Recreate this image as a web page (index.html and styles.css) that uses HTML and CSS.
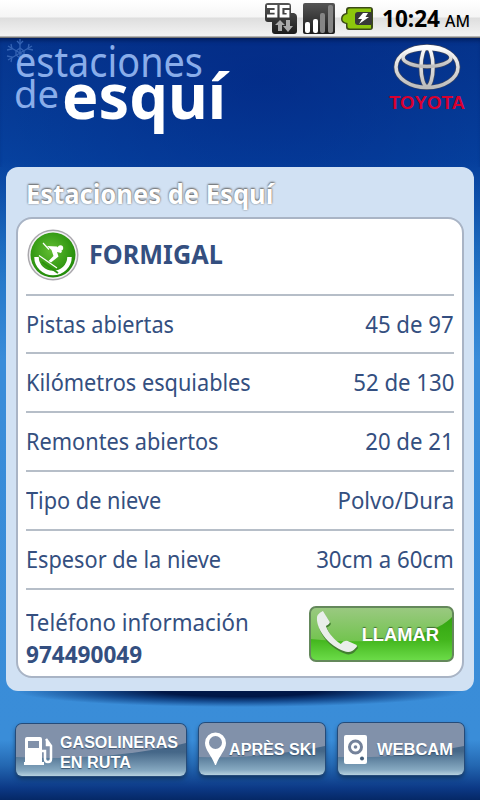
FILE: index.html
```html
<!DOCTYPE html>
<html lang="es">
<head>
  <meta charset="UTF-8">
  <meta name="viewport" content="width=device-width, initial-scale=1.0">
  <title>Estaciones de Esquí</title>
  <link rel="stylesheet" href="styles.css">
</head>
<body>
  <div class="status-bar">
    <svg class="status-3g" width="32" height="32" viewBox="0 0 32 32">
      <defs>
        <linearGradient id="dark" x1="0" y1="0" x2="0" y2="1">
          <stop offset="0" stop-color="#555"/>
          <stop offset="1" stop-color="#1c1c1c"/>
        </linearGradient>
      </defs>
      <path d="M3 0H23Q26 0 26 3V10H29Q32 11 32 14V28Q32 31 29 31H10Q7 31 7 28V19H3Q0 19 0 16V3Q0 0 3 0Z" fill="url(#dark)"/>
      <path d="M2 3.500H11V13H2M5 8.300H10M24.500 3.500H16V13H23V8.500H19.500" fill="none" stroke="#fff" stroke-width="2.800"/>
      <path d="M15 17L20 22H17V28H13V22H10ZM21 17H25V23H28L23 29L18 23H21Z" fill="#aaa"/>
    </svg>
    <svg class="status-signal" width="32" height="32" viewBox="0 0 32 32">
      <rect width="32" height="31" rx="2" fill="url(#dark)"/>
      <rect x="2" y="19" width="5" height="11" rx="2" fill="#fff"/>
      <rect x="10" y="16" width="5" height="14" rx="2" fill="#fff"/>
      <rect x="17" y="10" width="5" height="20" rx="2" fill="#858585"/>
      <rect x="25" y="2" width="5" height="28" rx="2" fill="#858585"/>
    </svg>
    <svg class="status-battery" width="32" height="24" viewBox="0 0 32 24">
      <path d="M8 0H29Q32 0 32 3V20Q32 23 29 23H8Q5 23 5 20V17Q0 16 0 12Q0 7 5 6V3Q5 0 8 0Z" fill="#3b4a18"/>
      <path d="M9 1.500H30V5H19Q15 5 15 9V14Q15 18 19 18H30V21.500H9Q6.500 21.500 6.500 19V16Q1.500 15 1.500 12Q1.500 8 6.500 7V4Q6.500 1.500 9 1.500Z" fill="#8dc70c"/>
      <rect x="14" y="5" width="17" height="13" rx="3" fill="#383838"/>
      <path d="M22 6H27L24.500 10H28L18 17L21 12H17Z" fill="#fff"/>
    </svg>
    <svg class="status-clock" width="96" height="32" viewBox="0 0 96 32">
      <text x="0" y="24" textLength="58" lengthAdjust="spacingAndGlyphs" class="clock-time">10:24</text>
      <text x="63" y="24" textLength="25" lengthAdjust="spacingAndGlyphs" class="clock-period">AM</text>
    </svg>
  </div>

  <div class="header">
    <svg class="logo" width="240" height="110" viewBox="0 0 240 110">
      <g fill="none" stroke="#3463b4" stroke-width="1.300">
        <path d="M20 1V28M8 8L32 22M8 22L32 8"/>
        <path d="M17 3L20 6L23 3M17 27L20 24L23 27M7 12L12 11L11 6M29 6L28 11L33 12M7 18L12 19L11 24M20 10L24 13V17L20 20L16 17V13Z"/>
      </g>
      <text x="15" y="39" textLength="188" lengthAdjust="spacingAndGlyphs" class="logo-light">estaciones</text>
      <text x="14" y="70" textLength="45" lengthAdjust="spacingAndGlyphs" class="logo-light logo-de">de</text>
      <text x="62" y="81" textLength="164" lengthAdjust="spacingAndGlyphs" class="logo-bold">esquí</text>
    </svg>
    <svg class="toyota" width="84" height="76" viewBox="0 0 84 76">
      <defs>
        <linearGradient id="silver" x1="0" y1="0" x2="0" y2="1">
          <stop offset="0" stop-color="#fff"/>
          <stop offset="1" stop-color="#bdbdbd"/>
        </linearGradient>
      </defs>
      <g fill="none" stroke="#3c4661" stroke-width="5">
        <ellipse cx="39" cy="24" rx="31" ry="20.500"/>
        <ellipse cx="39" cy="24" rx="6" ry="19.500"/>
        <ellipse cx="39" cy="14.500" rx="24" ry="9"/>
      </g>
      <g fill="none" stroke="url(#silver)" stroke-width="3.500">
        <ellipse cx="39" cy="24" rx="31" ry="20.500"/>
        <ellipse cx="39" cy="24" rx="6" ry="19.500"/>
        <ellipse cx="39" cy="14.500" rx="24" ry="9"/>
      </g>
      <text x="1" y="66" textLength="76" lengthAdjust="spacingAndGlyphs" class="toyota-name">TOYOTA</text>
    </svg>
  </div>

  <div class="panel">
    <h1><span>Estaciones de Esquí</span></h1>
    <div class="card">
      <div class="resort">
        <svg width="54" height="54" viewBox="0 0 54 54">
          <defs>
            <radialGradient id="green" cx=".45" cy=".4" r=".6">
              <stop offset="0" stop-color="#62bd32"/>
              <stop offset="1" stop-color="#218b08"/>
            </radialGradient>
          </defs>
          <circle cx="27" cy="27" r="25.500" fill="#aaa8ad"/>
          <circle cx="27" cy="27" r="24" fill="#f4f2f5"/>
          <circle cx="27" cy="27" r="22.500" fill="url(#green)"/>
          <path d="M10.500 29A16.500 16 0 0 0 43.500 29" fill="none" stroke="#fff" stroke-width="4.500"/>
          <path d="M16 34L32 45" stroke="#2c910f" stroke-width="2"/>
          <circle cx="34.500" cy="20" r="2.700" fill="#fff"/>
          <path d="M21 18L31 18.500L36 23L35 25L31 24L32.500 28.500L25 34.500L22.500 33L27.500 28L25.500 22Z" fill="#fff"/>
          <path d="M17 15L23 21.500M13 27.500L31 40" fill="none" stroke="#fff" stroke-width="1.200"/>
        </svg>
        <h2><span>FORMIGAL</span></h2>
      </div>
      <div class="row pistas"><span class="label">Pistas abiertas</span><span class="value">45 de 97</span></div>
      <div class="row"><span class="label">Kilómetros esquiables</span><span class="value">52 de 130</span></div>
      <div class="row"><span class="label">Remontes abiertos</span><span class="value">20 de 21</span></div>
      <div class="row"><span class="label">Tipo de nieve</span><span class="value">Polvo/Dura</span></div>
      <div class="row"><span class="label">Espesor de la nieve</span><span class="value">30cm a 60cm</span></div>
      <div class="phone">
        <div class="phone-text">
          <span class="label">Teléfono información</span>
          <strong>974490049</strong>
        </div>
        <button class="call">
          <svg width="145" height="56" viewBox="0 0 146 56" preserveAspectRatio="none">
            <defs>
              <linearGradient id="call" x1="0" y1="0" x2="0" y2="1">
                <stop offset="0" stop-color="#2c9e0b"/>
                <stop offset=".6" stop-color="#42b51c"/>
                <stop offset="1" stop-color="#6ddd4a"/>
              </linearGradient>
              <linearGradient id="gloss" x1="0" y1="0" x2="0" y2="1">
                <stop offset="0" stop-color="#9bc982"/>
                <stop offset="1" stop-color="#72c44e"/>
              </linearGradient>
            </defs>
            <rect x="1" y="1" width="144" height="54" rx="6" fill="url(#call)"/>
            <path d="M1 33V7Q1 1 7 1H139Q145 1 145 7V10C126 31 72 40 1 33Z" fill="url(#gloss)"/>
            <rect x="1" y="1" width="144" height="54" rx="6" fill="none" stroke="#64885b" stroke-width="2"/>
            <path d="M14 6L21 16Q21 18 17 20C20 28 26 34 32 38Q35 34 39 35L48 39Q49 41 47 42Q42 49 35 46C21 41 9 27 8 15Q7 9 14 6Z" fill="#427f30" transform="translate(1 1.500)"/>
            <path d="M14 5L21 16Q21 18 17 20C20 28 26 34 32 38Q35 34 39 35L48 39Q49 41 47 42Q42 48 35 45C21 40 9 26 8 14Q7 8 14 5Z" fill="#e9eeea"/>
            <text x="53" y="35" textLength="78" lengthAdjust="spacingAndGlyphs" class="call-text">LLAMAR</text>
          </svg>
        </button>
      </div>
    </div>
  </div>

  <div class="tabs">
    <button class="tab gas">
      <svg width="170" height="52" viewBox="1 1 170 52">
        <path d="M1 34V6Q1 1 6 1H166Q171 1 171 6V20C132 30 68 38 1 34Z" class="shine"/>
        <path fill-rule="evenodd" d="M12 14H25Q27 14 27 16V39H29V42H9V39H10V16Q10 14 12 14ZM13 18V25H24V18Z" fill="#fff"/>
        <path d="M27 28H30V36Q30 39 33 39T36 36V23L31 16M32 17V22H36" fill="none" stroke="#fff" stroke-width="2.500"/>
        <text x="45" y="25" textLength="118" lengthAdjust="spacingAndGlyphs" class="tab-text">GASOLINERAS</text>
        <text x="45" y="45" textLength="71" lengthAdjust="spacingAndGlyphs" class="tab-text">EN RUTA</text>
      </svg>
    </button>
    <button class="tab apres">
      <svg width="126" height="52" viewBox="1 1 126 52">
        <path d="M1 35V6Q1 1 6 1H122Q127 1 127 6V24C96 30 50 37 1 35Z" class="shine"/>
        <path fill-rule="evenodd" d="M17 43C14 34 7 28 7 21A10.500 10.500 0 0 1 28 21C28 28 21 34 18 43ZM17.500 14A6.500 6.500 0 1 0 17.500 27A6.500 6.500 0 1 0 17.500 14Z" fill="#fff"/>
        <text x="31" y="33" textLength="87" lengthAdjust="spacingAndGlyphs" class="tab-text">APRÈS SKI</text>
      </svg>
    </button>
    <button class="tab webcam">
      <svg width="126" height="52" viewBox="1 1 126 52">
        <path d="M1 35V6Q1 1 6 1H122Q127 1 127 6V24C96 30 50 37 1 35Z" class="shine"/>
        <rect x="7" y="13" width="23" height="29" rx="2" fill="#fff"/>
        <circle cx="18.500" cy="25" r="6" fill="none" stroke="#74829a" stroke-width="3"/>
        <circle cx="18.500" cy="25" r="1.800" fill="#74829a"/>
        <circle cx="25" cy="36.500" r="2" fill="#445e7a"/>
        <text x="40" y="33" textLength="76" lengthAdjust="spacingAndGlyphs" class="tab-text">WEBCAM</text>
      </svg>
    </button>
  </div>
</body>
</html>
```
FILE: styles.css
```css
* {
  box-sizing: border-box;
}
body {
  margin: 0;
  width: 480px;
  height: 800px;
  overflow: hidden;
  font-family: 'Noto Sans', sans-serif;
  color: #344f80;
  background: radial-gradient(ellipse 420px 260px at 55% 10%, rgba(0, 30, 125, 0.55), rgba(0, 30, 125, 0)), linear-gradient(#073b91 38px, #0748a5 160px, #1e70c3 245px, #398cd9 360px, #3a8dd8 740px, #2468b2 765px, #0c3986 788px, #052866 800px);
}
svg {
  display: block;
}
.status-bar {
  height: 38px;
  display: flex;
  align-items: flex-start;
  padding: 3px 0 0 265px;
  background: linear-gradient(#fff, #f5f5f5 17px, #dedede 18px, #f3f3f3 36px, #777 37px);
}
.status-signal {
  margin-left: 6px;
}
.status-battery {
  margin: 4px 0 0 6px;
}
.status-clock {
  margin-left: 9px;
}
.clock-time {
  font-size: 23px;
  font-weight: bold;
}
.clock-period {
  font-size: 16px;
  font-weight: 500;
}
.header {
  height: 129px;
  display: flex;
  justify-content: space-between;
  box-shadow: inset 0 5px 5px -3px #001a57;
}
.toyota {
  margin: 5px 8px 0 0;
}
.logo-light {
  font-size: 42px;
  fill: #89adea;
}
.logo-de {
  font-size: 38px;
}
.logo-bold {
  font-size: 62px;
  font-weight: bold;
  fill: #fff;
}
.toyota-name {
  font-family: 'Liberation Sans', sans-serif;
  font-size: 18px;
  font-weight: bold;
  fill: #d8002f;
}
.panel {
  position: relative;
  width: 468px;
  height: 524px;
  margin: 0 6px;
  padding: 10px 10px 0;
  border-radius: 12px;
  background: #d1e1f3;
}
.panel::after {
  content: "";
  position: absolute;
  z-index: -1;
  left: 10px;
  right: 10px;
  bottom: -16px;
  height: 32px;
  background: radial-gradient(ellipse closest-side, #001747 35%, rgba(0, 38, 102, 0.65) 65%, rgba(0, 50, 120, 0));
}
h1, h2 {
  margin: 0;
}
h1 {
  height: 40px;
  padding-left: 10px;
  font-size: 26px;
  line-height: 34px;
  color: #fff;
  text-shadow: 0 -1px 2px #666, 0 0 2px #888;
  white-space: nowrap;
}
h1 span, h2 span, .label, .value, strong {
  display: inline-block;
  transform: scaleX(0.94);
  transform-origin: left;
  white-space: nowrap;
}
h1 span {
  transform: scaleX(0.983);
}
h2 span {
  transform: scaleX(0.97);
}
.label {
  transform: scaleX(0.905);
}
.value {
  transform: scaleX(0.925);
  transform-origin: right;
}
.card {
  height: 461px;
  padding: 0 8px;
  border: 2px solid #a9b4c5;
  border-radius: 16px;
  background: #fff;
}
.resort {
  height: 77px;
  display: flex;
  align-items: center;
  padding-bottom: 3px;
  border-bottom: 2px solid #b6bec8;
}
h2 {
  margin: -2px 0 0 9px;
  font-size: 26px;
  line-height: 36px;
}
.row {
  height: 59px;
  display: flex;
  align-items: center;
  justify-content: space-between;
  padding-bottom: 2px;
  border-bottom: 2px solid #b6bec8;
  font-size: 24px;
}
.pistas {
  height: 58px;
}
.phone {
  height: 87px;
  display: flex;
  justify-content: space-between;
  font-size: 24px;
}
.phone-text {
  width: 240px;
  padding-top: 16px;
  line-height: 32px;
}
.phone .label {
  transform: scaleX(0.928);
}
strong {
  display: block;
}
button {
  padding: 0;
  border: none;
  background: none;
  cursor: pointer;
}
.call {
  height: 56px;
  margin-top: 16px;
}
.call-text, .tab-text {
  font-family: 'Liberation Sans', sans-serif;
  font-weight: bold;
  fill: #fff;
}
.call-text {
  font-size: 19px;
  text-shadow: 0 -1px 1px #426d34;
}
.tabs {
  display: flex;
  align-items: flex-start;
  padding: 32px 14px 0 16px;
}
.tab {
  height: 52px;
  border-radius: 6px;
  background: linear-gradient(#48658c 0, #456788 54%, #86a9c1 90%, #b7d2df);
  box-shadow: 0 0 0 1px #254b79, 0 3px 5px #10345f;
  overflow: hidden;
}
.gas {
  margin-top: 1px;
}
.apres {
  margin-left: 13px;
}
.webcam {
  margin-left: 13px;
}
.shine {
  fill: #8191aa;
}
.tab-text {
  font-size: 16px;
  text-shadow: 0 1px 1px #3c5570;
}
```
